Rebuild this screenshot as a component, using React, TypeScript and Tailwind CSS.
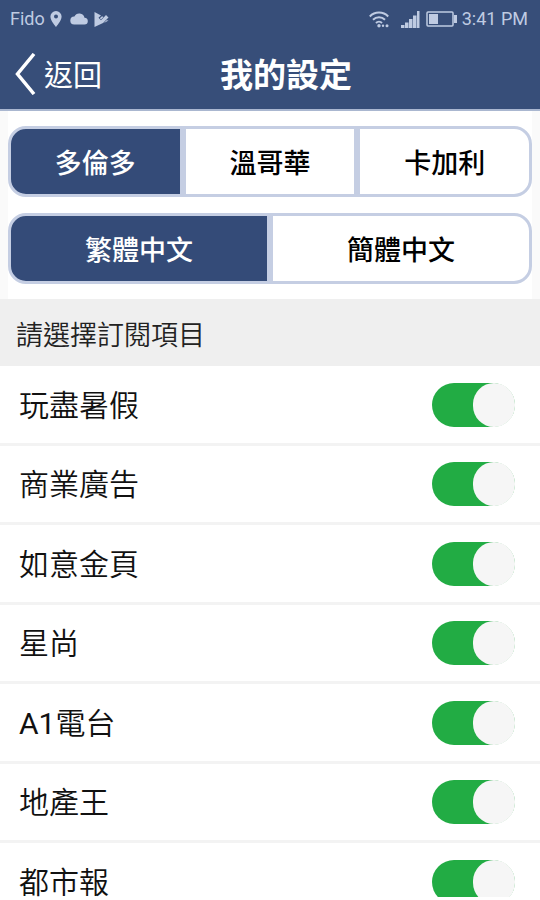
import { useState } from "react";

const cities = ["多倫多", "溫哥華", "卡加利"];
const languages = ["繁體中文", "簡體中文"];
const topics = [
  { name: "玩盡暑假" },
  { name: "商業廣告" },
  { name: "如意金頁" },
  { name: "星尚" },
  { prefix: "A1", name: "電台" },
  { name: "地產王" },
  { name: "都市報" },
];

function StatusBar() {
  return (
    <div className="flex h-[38px] items-center justify-between pr-3 pl-[10px] text-lg leading-5 text-[#bfcbe2]">
      <div className="flex items-center">
        <span>Fido</span>
        <svg className="ml-[5px] h-4 w-3" viewBox="0 0 12 16" fill="currentColor" aria-hidden="true">
          <path fillRule="evenodd" d="M6 0a5.6 5.6 0 0 0-5.6 5.6C.4 9.8 6 16 6 16s5.600-6.200 5.600-10.400A5.600 5.600 0 0 0 6 0Zm0 3.600a2 2 0 1 1 0 4 2 2 0 0 1 0-4Z" />
        </svg>
        <svg className="ml-2 h-3 w-[18px]" viewBox="0 0 18 12" fill="currentColor" aria-hidden="true">
          <path d="M14.500 4.700A5.400 5.400 0 0 0 4.400 3.500 4 4 0 0 0 4.200 11.500H14.300a3.400 3.400 0 0 0 .2-6.800Z" />
        </svg>
        <svg className="ml-[6px] h-[15px] w-[15px]" viewBox="0 0 15 15" fill="currentColor" aria-hidden="true">
          <path d="M.5 0 7 3.500 4.500 5.800 7 8.300 12 3 14.500 5.500 9 11 .5 15Z" />
          <path d="M8 4.200 9.500 5 7 7.500 5.800 6.200Z" />
          <path d="m12.500 8.200 2 .3-4.500 2.500Z" />
        </svg>
      </div>
      <div className="flex items-center">
        <svg className="h-[17px] w-5" viewBox="0 0 20 17" fill="none" stroke="currentColor" strokeWidth="2" aria-hidden="true">
          <path d="M.8 5.500C5.800.300 14.200.300 19.200 5.500M4 8.800c3.400-3.500 8.600-3.500 12 0M7 12c1.700-1.700 4.300-1.700 6 0" />
          <circle cx="10" cy="14.800" r="1.700" fill="currentColor" stroke="none" />
          <circle cx="14" cy="14.800" r="1.200" fill="currentColor" stroke="none" />
          <circle cx="18" cy="14.800" r="1.500" fill="currentColor" stroke="none" />
        </svg>
        <svg className="ml-3 h-[17px] w-[19px]" viewBox="0 0 19 17" fill="currentColor" aria-hidden="true">
          <path d="M0 14h3.500v3H0zM4 11.500h3.500V17H4zM8 8h3.500v9H8zM12 4.500h3.500V17H12zM16 0h2.500V17H16z" />
        </svg>
        <svg className="ml-[6px] h-4 w-[31px]" viewBox="0 0 31 16" fill="currentColor" aria-hidden="true">
          <rect x="1" y="1" width="26" height="14" rx="1" fill="none" stroke="currentColor" strokeWidth="1.500" />
          <path d="M3 3h9v10H3zM28 4h3v8h-3z" />
        </svg>
        <span className="ml-[5px]">3:41 PM</span>
      </div>
    </div>
  );
}

function Segmented({ label, options }: { label: string; options: string[] }) {
  const [selected, setSelected] = useState(0);
  return (
    <div role="group" aria-label={label} className="flex h-[71px]">
      {options.map((option, index) => (
        <button
          key={option}
          type="button"
          aria-pressed={index === selected}
          onClick={() => setSelected(index)}
          className="flex-1 border-[3px] border-[#c5cee3] bg-white pt-1 text-[27px] leading-8 font-medium text-black first:rounded-l-[18px] last:rounded-r-[18px] aria-pressed:bg-[#344b78] aria-pressed:text-white"
        >
          {option}
        </button>
      ))}
    </div>
  );
}

function TopicRow({ prefix, name }: { prefix?: string; name: string }) {
  return (
    <li className="border-b-[3px] border-[#f3f3f3] odd:h-20 even:h-[79px]">
      <label className="flex h-full items-center justify-between pr-[25px] pl-[19px] text-[30px] leading-[30px] font-[350] text-[#111111]">
        <span className="pt-0.5">
          {prefix && <span className="font-normal">{prefix}</span>}
          {name}
        </span>
        <input
          type="checkbox"
          defaultChecked
          className="h-11 w-[83px] shrink-0 appearance-none rounded-full bg-[#d4d4d4] before:block before:h-11 before:w-[42px] before:rounded-full before:bg-[#f6f6f6] checked:bg-[#22ac44] checked:before:ml-auto"
        />
      </label>
    </li>
  );
}

export default function App() {
  return (
    <div className="flex h-screen flex-col overflow-hidden bg-white pb-[3px] font-['Roboto','Noto_Sans_CJK_TC',sans-serif]">
      <header className="shrink-0 border-b-2 border-[#aab7d0] bg-[#374e79]">
        <StatusBar />
        <div className="grid h-[71px] grid-cols-[1fr_auto_1fr] items-center text-white">
          <button type="button" className="flex items-center justify-self-start pl-[15px] text-[29px] leading-9">
            <svg className="h-[42px] w-[21px]" viewBox="0 0 21 42" fill="none" stroke="currentColor" strokeWidth="3.500" aria-hidden="true">
              <path d="M19 1 2.500 21 19 41" />
            </svg>
            <span className="ml-2 pt-1">返回</span>
          </button>
          <h1 className="pt-1 pl-8 text-[33px] leading-10 font-bold">我的設定</h1>
        </div>
      </header>
      <div className="flex shrink-0 flex-col gap-4 border-x-8 border-[#fafafa] pt-[15px] pb-[15px]">
        <Segmented label="城市" options={cities} />
        <Segmented label="語言" options={languages} />
      </div>
      <h2 className="flex h-[67px] shrink-0 items-center bg-[#efefef] pt-1.5 pl-4 text-[27px] leading-8 font-[350] text-[#222222]">
        請選擇訂閱項目
      </h2>
      <ul className="min-h-0 flex-1 overflow-hidden">
        {topics.map((topic) => (
          <TopicRow key={topic.name} prefix={topic.prefix} name={topic.name} />
        ))}
      </ul>
    </div>
  );
}
